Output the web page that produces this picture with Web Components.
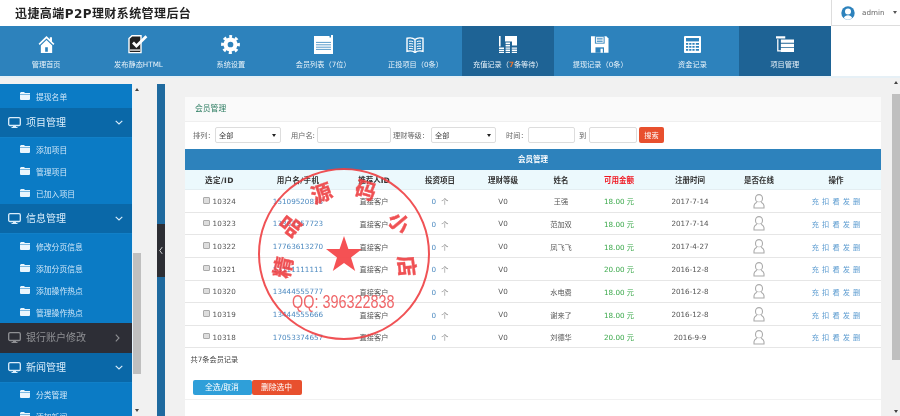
<!DOCTYPE html>
<html lang="zh"><head><meta charset="utf-8"><title>迅捷高端P2P理财系统管理后台</title>
<style>
html,body{margin:0;padding:0;width:900px;height:416px;overflow:hidden;background:#f1f1f1;font-family:"DejaVu Sans","Noto Sans CJK SC",sans-serif;font-size:7.2px;color:#555}
</style></head><body>
<page-shell></page-shell>
<script>
const ICONS={
home:'<svg viewBox="0 0 18 20" width="17" height="19"><path d="M9 1 .6 9.2l1.2 1.3L9 3.6l7.2 6.9 1.2-1.3-2.6-2.5V2.2h-2.3v2.3z" fill="#fff"/><path fill-rule="evenodd" d="M9 5.2 3 11v8h12v-8zM7.6 13h2.8v4.6H7.6z" fill="#fff"/></svg>',
pub:'<svg viewBox="0 0 20 19" width="20" height="19"><path d="M1 3.6 4 .8h9v16.8H1z" fill="#222" stroke="#fff" stroke-width="1.4"/><path d="M1.6 14.2h11v1.8h-11z" fill="#bbb"/><path d="M5 7.6 8.4 11 18.4 1.2" fill="none" stroke="#fff" stroke-width="2.8"/></svg>',
gear:'<svg viewBox="0 0 20 20" width="19" height="19"><circle cx="10" cy="10" r="5.2" fill="none" stroke="#fff" stroke-width="4.4"/><circle cx="10" cy="10" r="8.2" fill="none" stroke="#fff" stroke-width="3.4" stroke-dasharray="3.22 3.22" stroke-dashoffset="1.61" transform="rotate(-90 10 10)"/></svg>',
list:'<svg viewBox="0 0 19 19" width="19" height="19"><path d="M0 1h15.5v1.6H17V0h2v19H0z" fill="#fff"/><path d="M2 7.4h15M2 9.8h15M2 12.2h15M2 14.4h15" stroke="#5b9ccb" stroke-width="1"/></svg>',
book:'<svg viewBox="0 0 18 16" width="18" height="16" fill="none" stroke="#fff"><path d="M9 2.6C7 .8 3.6.6 1 1.3v13c2.6-.7 6-.5 8 1.3 2-1.8 5.4-2 8-1.3v-13C14.400.6 11 .8 9 2.600zM9 2.600v13" stroke-width="1.400"/><path d="M3 4.200c1.300-.2 3-.1 4.200.4M3 6.700c1.300-.2 3-.1 4.200.4M3 9.200c1.300-.2 3-.1 4.200.4M3 11.500c1.300-.2 3-.1 4.200.4M15 4.200c-1.300-.2-3-.1-4.200.4M15 6.700c-1.300-.2-3-.1-4.200.4M15 9.200c-1.300-.2-3-.1-4.200.4M15 11.500c-1.300-.2-3-.1-4.200.4" stroke-width="1"/></svg>',
coin:'<svg viewBox="0 0 18 17" width="18" height="17" fill="#fff"><path d="M0 0h1.600v10.600H0zM6 0h12v9.600h-5V5.400H6z"/><path d="M6.600 6.400h4.400v1.600H6.600zM6.600 8.800h4.400v1.600H6.600zM0 11.600h5v1.400H0zM6.600 11.400h4.400v1.400H6.600zM12.800 11.400H18v1.400h-5.200zM0 13.800h5v1.200H0zM6.600 13.600h4.400v1.400H6.600zM12.800 13.600H18V15h-5.200zM0 15.800h5V17H0zM6.600 15.800h4.400V17H6.600zM12.800 15.800H18V17h-5.200z"/></svg>',
disk:'<svg viewBox="0 0 18 17" width="17.500" height="17"><path d="M0 0h15.800L18 2.200V17H0z" fill="#fff"/><path d="M4 0h10v7.600H4z" fill="#2d82bc"/><path d="M5 .9h8v5.800H5z" fill="#fff"/><path d="M6 2.200h6M6 3.800h6M6 5.400h6" stroke="#2d82bc" stroke-width=".8"/><path d="M4.600 11.400h8.800V17H4.600z" fill="#2d82bc"/><path d="M9.800 12.800h2.400V17H9.800z" fill="#fff"/></svg>',
calc:'<svg viewBox="0 0 17 17" width="17" height="17"><rect width="17" height="17" rx="1" fill="#fff"/><rect x="2" y="2" width="13" height="3.400" fill="#2d82bc"/><g fill="#2d82bc"><path d="M2 7h2.200v1.800H2zM5.200 7h2.200v1.800H5.200zM8.400 7h2.200v1.800H8.400zM11.800 7H15v1.800h-3.200zM2 10h2.200v1.800H2zM5.200 10h2.200v1.800H5.200zM8.400 10h2.200v1.800H8.400zM11.800 10H15v1.800h-3.200zM2 13h2.200v1.800H2zM5.200 13h2.200v1.800H5.200zM8.400 13h2.200v1.800H8.400zM11.800 13H15v1.800h-3.200z"/></g></svg>',
stack:'<svg viewBox="0 0 19 17" width="18.500" height="17" fill="#fff"><path d="M0 0h9.500v2.400H0zM5 3.400h14v3.400H5zM5 7.800h14v3.400H5zM5 12.200h14v4H5zM1.200 3h1.300v11.400H5v1.300H1.200z"/></svg>',
monitor:'<svg viewBox="0 0 13 11" width="13" height="11"><rect x=".7" y=".7" width="11.600" height="7.800" rx="1.300" fill="none" stroke="currentColor" stroke-width="1.300"/><path d="M3.500 10h6v1h-6z" fill="currentColor"/><path d="M5 8.800h3v1.400H5z" fill="currentColor"/></svg>',
folder:'<svg viewBox="0 0 10 8" width="10" height="8"><path d="M1 0h3l1 1h5v1H0V1zM0 2.600h10V7a1 1 0 0 1-1 1H1a1 1 0 0 1-1-1z" fill="#e9f5fd"/></svg>',
down:'<svg viewBox="0 0 8 5" width="8" height="5"><path d="M.7.8 4 4l3.300-3.200" fill="none" stroke="currentColor" stroke-width="1.100"/></svg>',
right:'<svg viewBox="0 0 5 8" width="5" height="8"><path d="M.8.700 4 4 .8 7.300" fill="none" stroke="currentColor" stroke-width="1.100"/></svg>',
person:'<svg viewBox="0 0 12 15" width="12" height="15"><ellipse cx="6" cy="4.400" rx="3.500" ry="3.800" fill="#fff" stroke="#aaa" stroke-width="1.100"/><path d="M3.800 8.200C2.600 9 1 10 1 11.800V14h10v-2.200C11 10 9.400 9 8.200 8.200" fill="#fff" stroke="#aaa" stroke-width="1.100"/></svg>'
};
function el(name,make){customElements.define(name,class extends HTMLElement{constructor(){super();this.attachShadow({mode:'open'})}connectedCallback(){this.shadowRoot.innerHTML=make(this)}})}
const a=(h,n)=>h.getAttribute(n)||'';

el('nav-item',h=>`<style>:host{display:flex;flex:1 1 0;flex-direction:column;align-items:center;height:50px;box-sizing:border-box;padding-top:9px;color:#e8f2f9;font-size:7.2px;background:${h.hasAttribute('active')?'#1e6395':'transparent'}}
.i{height:19px;display:flex;align-items:center;justify-content:center}.t{margin-top:6px;line-height:10px;white-space:nowrap}</style><div class="i">${ICONS[a(h,'icon')]}</div><div class="t"><slot></slot></div>`);

el('main-nav',()=>`<style>:host{display:flex;width:831px;height:50px;background:#2d82bc}</style><slot></slot>`);

el('top-bar',()=>`<style>:host{display:flex;height:26px;box-sizing:border-box;background:#fff;align-items:center}
.t{flex:1;padding:2px 0 0 15px;box-sizing:border-box;height:26px;font:700 12px/24px "DejaVu Sans","Noto Sans CJK SC",sans-serif;color:#222;letter-spacing:.42px}
.u{width:69px;height:26px;box-sizing:border-box;border-left:1px solid #ddd;border-bottom:1px solid #ddd;display:flex;align-items:center;padding-left:9px;gap:7px;color:#666;font-size:7.2px}
.c{width:0;height:0;border:2.500px solid transparent;border-top:3.500px solid #555;border-bottom:0;margin-left:1px}</style>
<div class="t"><slot></slot></div><div class="u"><svg viewBox="0 0 14 14" width="14" height="14"><circle cx="7" cy="7" r="6.700" fill="#2d82bc"/><circle cx="7" cy="5.600" r="3" fill="#fff"/><path d="M2.800 12c.8-2 2.400-2.800 4.200-2.800s3.400.8 4.200 2.800a6.500 6.500 0 0 1-8.400 0z" fill="#fff"/></svg><span>admin</span><i class="c"></i></div>`);

el('menu-head',h=>{const d=h.hasAttribute('dark');return `<style>:host{display:flex;align-items:center;height:30px;box-sizing:border-box;padding-left:8px;background:${d?'#2d2e36':'#0a68a8'};color:${d?'#8f9094':'#dbeefb'};font-size:10px;border-bottom:1px solid ${d?'#2d2e36':'#1180c8'}}
.t{margin-left:5px;flex:1;white-space:nowrap;line-height:12px}.a{width:17px;display:flex}</style>${ICONS.monitor}<span class="t"><slot></slot></span><span class="a">${d?ICONS.right:ICONS.down}</span>`});

el('menu-item',()=>`<style>:host{display:flex;align-items:center;height:22px;padding-left:20px;color:#cfe6f8;font-size:7.800px;white-space:nowrap}span{margin-left:6px}</style>${ICONS.folder}<span><slot></slot></span>`);

el('side-menu',()=>`<style>:host{display:block;width:133px;height:332px;overflow:hidden;background:#0b7bc5;box-sizing:border-box;border-right:1px solid #e8f2f9;flex:none}</style><slot></slot>`);

el('fake-scroll',h=>`<style>:host{display:flex;flex-direction:column;width:8px;flex:none;background:#f1f1f1;align-items:center}
.u,.d{width:0;height:0;border:2px solid transparent;flex:none}.u{border-bottom:3px solid #444;border-top:0;margin-top:${a(h,'arrow')}px}.d{border-top:3px solid #444;border-bottom:0;margin-bottom:${a(h,'arrow')}px}
.s{height:${a(h,'before')}px;flex:none}.t{height:${a(h,'thumb')}px;width:8px;background:#bfbfbf;flex:none}.g{flex:1}</style><i class="u"></i><div class="s"></div><div class="t"></div><div class="g"></div><i class="d"></i>`);

el('collapse-bar',()=>`<style>:host{display:flex;flex-direction:column;width:8px;height:332px;background:#1f6a9f;flex:none}.s{height:140px}.b{height:53px;background:#2d2e34;color:#fff;display:flex;align-items:center;justify-content:center}</style><div class="s"></div><div class="b"><svg viewBox="0 0 5 10" width="4" height="9"><path d="M4 .8.900 5 4 9.200" fill="none" stroke="#fff" stroke-width="1"/></svg></div>`);

el('filter-bar',()=>`<style>:host{display:flex;align-items:center;height:27px;box-sizing:border-box;padding:0 0 1px 8px;color:#666;font-size:7.200px;white-space:nowrap;background:#fff}
.f{height:16px;box-sizing:border-box;border:1px solid #ddd;border-radius:2px;background:#fff;display:flex;align-items:center;justify-content:space-between;padding:0 4px 0 3px;color:#444}
.f i{width:0;height:0;border:2px solid transparent;border-top:3px solid #222;border-bottom:0}
.b{height:16px;width:25px;border-radius:2px;background:#e8502e;color:#fff;display:flex;align-items:center;justify-content:center;margin-left:2px}
.l{display:block}</style>
<span class="l" style="width:22px">排列：</span><div class="f" style="width:66px"><span>全部</span><i></i></div>
<span class="l" style="margin-left:10px;width:26px">用户名:</span><div class="f" style="width:74px"></div>
<span class="l" style="margin-left:2px;width:38px">理财等级：</span><div class="f" style="width:65px"><span>全部</span><i></i></div>
<span class="l" style="margin-left:10px;width:22px">时间：</span><div class="f" style="width:47px"></div>
<span class="l" style="margin-left:4px;width:10px">到</span><div class="f" style="width:48px"></div><div class="b">搜索</div>`);

const COLS='grid-template-columns:69px 88px 64px 68px 58px 58px 58px 84px 54px 95px';
el('member-head',()=>`<style>:host{display:grid;${COLS};height:20px;background:#ecf9fd;align-items:center;justify-items:center;font-size:7.500px;font-weight:700;color:#333;border-bottom:1px solid #e4eef2;box-sizing:border-box}.r{color:#f0141e}.o{padding-left:5px}.w{letter-spacing:.4px}</style>
<span class="w">选定/ID</span><span class="w">用户名/手机</span><span>推荐人ID</span><span>投资项目</span><span>理财等级</span><span>姓名</span><span class="r">可用金额</span><span>注册时间</span><span>是否在线</span><span class="o">操作</span>`);

el('member-row',h=>`<style>:host{display:grid;${COLS};height:22.650px;box-sizing:border-box;border-bottom:1px solid #e6e6e6;padding-top:1px;align-items:center;justify-items:center;font-size:7.200px;color:#555;background:#fff}
.id{display:flex;align-items:center;gap:3px;letter-spacing:.1px}.c{width:4.500px;height:4.500px;border:.5px solid #aaa;background:#ddd;border-radius:1px;margin-top:-2px;display:block}
.l{color:#4d8ac0}.n{color:#4d8ac0}.n i{font-style:normal;color:#888;margin-left:5px}.g{color:#3aa84a}.o{color:#5b9bd0;display:flex;gap:3.100px;padding-left:5px}.p{display:flex}</style>
<span class="id"><i class="c"></i>${a(h,'uid')}</span><span class="l">${a(h,'tel')}</span><span>直接客户</span><span class="n">0<i>个</i></span><span>V0</span><span>${a(h,'who')}</span><span class="g">${a(h,'money')} 元</span><span>${a(h,'date')}</span><span class="p">${ICONS.person}</span><span class="o"><span>充</span><span>扣</span><span>看</span><span>发</span><span>删</span></span>`);

el('member-card',()=>`<style>:host{display:block;width:696px;background:#fff;height:319px;overflow:hidden;flex:none}
.h{height:25px;box-sizing:border-box;background:#fafafa;border-bottom:1px solid #efefef;color:#2e7d62;font-size:7.800px;line-height:24px;padding-left:10px}
.b{height:21px;background:#2d82bc;color:#fff;font-size:7.500px;font-weight:700;text-align:center;line-height:21px}
.s{padding:8px 0 0 5.500px;font-size:7.200px;color:#444;line-height:8px;height:8px}
.a{display:flex;margin:15.500px 0 0 7.500px;height:15px}.a div{height:15px;line-height:15px;text-align:center;color:#fff;font-size:7.800px;border-radius:2px}
.l{height:1px;background:#f1f1f1;margin-top:4px}</style>
<div class="h">会员管理</div><filter-bar></filter-bar><div class="b">会员管理</div><member-head></member-head><slot></slot>
<div class="s">共7条会员记录</div><div class="a"><div style="width:59px;background:#2f9fd9">全选/取消</div><div style="width:50px;background:#e8502e">删除选中</div></div><div class="l"></div>`);

const seal=[['精',282,267,-78],['品',289,225,-52],['源',321,192,-20],['码',366,189,16],['小',400,222,50],['店',408,266,84]];
el('stamp-seal',()=>`<style>:host{position:absolute;left:250px;top:160px;width:190px;height:190px;display:block;pointer-events:none}svg{display:block}</style>
<svg viewBox="250 160 190 190" width="190" height="190"><circle cx="344" cy="254" r="85" fill="none" stroke="#ee3f42" stroke-width="2" opacity=".9"/>
<polygon points="344,236 348.400,249 362,249 351,257.500 355.200,271 344,263 332.800,271 337,257.500 326,249 339.600,249" fill="#f4484b" opacity=".95"/>
${seal.map(s=>`<text transform="translate(${s[1]} ${s[2]}) rotate(${s[3]})" text-anchor="middle" dominant-baseline="central" font-family='"Noto Sans CJK SC",sans-serif' font-weight="700" font-size="21" stroke="#ee3f42" stroke-width=".4" fill="#ee3f42" opacity=".9">${s[0]}</text>`).join('')}
<text transform="translate(292 308) scale(.8 1.05)" font-family='"Liberation Sans",sans-serif' font-size="18" fill="#ee5558" opacity=".9">QQ: 396322838</text></svg>`);

const rows=[['10324','15109520833','王强','18.00','2017-7-14'],['10323','13363357723','范加双','18.00','2017-7-14'],['10322','17763613270','凤飞飞','18.00','2017-4-27'],['10321','13111111111','','20.00','2016-12-8'],['10320','13444555777','水电费','18.00','2016-12-8'],['10319','13444555666','谢来了','18.00','2016-12-8'],['10318','17053374657','刘德华','20.00','2016-9-9']];

el('page-shell',()=>`<style>:host{display:flex;flex-direction:column;position:relative;width:900px;height:416px;overflow:hidden;background:#f1f1f1;filter:blur(.3px)}
.c{display:flex;height:340px;box-sizing:border-box;border-top:2px solid #e6f0f6}.n{display:flex}.fill{flex:1;background:#fff}
.col{display:flex;padding-top:6px;height:332px}.gap{width:16px;flex:none}.main{flex:1;padding:19px 0 0 20px;background:#f1f1f1;display:flex;min-width:0}.v{padding-top:1px}
.lead{height:24px}</style>
<top-bar>迅捷高端P2P理财系统管理后台</top-bar>
<div class="n"><main-nav>
<nav-item icon="home">管理首页</nav-item><nav-item icon="pub">发布静态HTML</nav-item><nav-item icon="gear">系统设置</nav-item><nav-item icon="list">会员列表（7位）</nav-item><nav-item icon="book">正投项目（0条）</nav-item><nav-item icon="coin" active>充值记录（<b style="color:#e8742e">7</b>条等待）</nav-item><nav-item icon="disk">提现记录（0条）</nav-item><nav-item icon="calc">资金记录</nav-item><nav-item icon="stack" active>项目管理</nav-item>
</main-nav><div class="fill"></div></div>
<div class="c"><div class="col">
<side-menu><menu-item class="lead">提现名单</menu-item><menu-head>项目管理</menu-head><menu-item>添加项目</menu-item><menu-item>管理项目</menu-item><menu-item>已加入项目</menu-item><menu-head>信息管理</menu-head><div class="v"><menu-item>修改分页信息</menu-item><menu-item>添加分页信息</menu-item><menu-item>添加操作热点</menu-item><menu-item>管理操作热点</menu-item></div><menu-head dark>银行账户修改</menu-head><menu-head>新闻管理</menu-head><menu-item>分类管理</menu-item><menu-item>添加新闻</menu-item></side-menu>
<fake-scroll arrow="4" before="162" thumb="121"></fake-scroll><div class="gap"></div><collapse-bar></collapse-bar></div>
<div class="main"><member-card>${rows.map(r=>`<member-row uid="${r[0]}" tel="${r[1]}" who="${r[2]}" money="${r[3]}" date="${r[4]}"></member-row>`).join('')}</member-card></div>
<fake-scroll arrow="3" before="10" thumb="266" style="margin-left:11px"></fake-scroll></div>
<stamp-seal></stamp-seal>`);
</script>
</body></html>
